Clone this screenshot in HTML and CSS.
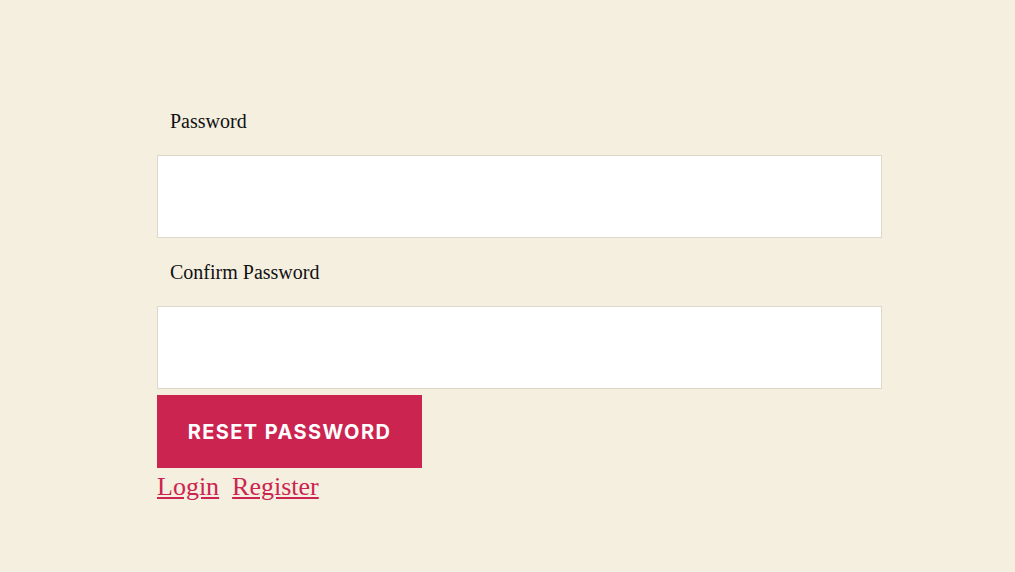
FILE: index.html
```html
<!DOCTYPE html>
<html>
<head>
<meta charset="utf-8">
<link rel="stylesheet" href="styles.css">
</head>
<body>
<main class="form">
  <label class="label" for="pw">Password</label>
  <input class="field" id="pw" type="password">
  <label class="label" for="pw2">Confirm Password</label>
  <input class="field" id="pw2" type="password">
  <button class="btn" type="button">RESET PASSWORD</button>
  <nav class="links">
    <a href="#">Login</a>
    <a href="#">Register</a>
  </nav>
</main>
</body>
</html>
```
FILE: styles.css
```css
html, body {
  margin: 0;
  background: #f5efe0;
}
body {
  font-family: "Liberation Serif", "Times New Roman", serif;
}
.form {
  width: 725px;
  margin-left: 157px;
  padding-top: 87px;
  display: flex;
  flex-direction: column;
  align-items: flex-start;
}
.label {
  display: block;
  box-sizing: border-box;
  height: 68px;
  padding: 22px 13px;
  font-size: 20px;
  line-height: 25px;
  color: #111;
}
.field {
  box-sizing: border-box;
  width: 725px;
  height: 83px;
  margin: 0;
  background: #fff;
  border: 1px solid #ddd8cc;
  outline: none;
}
.btn {
  margin-top: 6px;
  width: 265px;
  height: 73px;
  border: none;
  background: #cc2450;
  color: #fff;
  font-family: Inter, "Liberation Sans", sans-serif;
  font-weight: 700;
  font-size: 20px;
  letter-spacing: 1.4px;
  padding: 0;
}
.links {
  display: flex;
  gap: 13px;
  font-size: 26px;
  line-height: 38px;
}
.links a {
  color: #cc2450;
}
```
